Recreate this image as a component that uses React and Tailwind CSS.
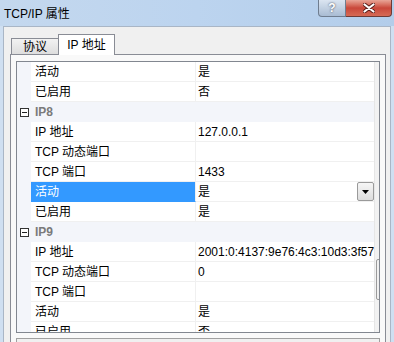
import React from 'react';

const font = { fontFamily: '"Liberation Sans", "Noto Sans CJK SC", sans-serif' };

const rows = [
  { name: '活动', value: '是' },
  { name: '已启用', value: '否' },
  { cat: 'IP8' },
  { name: 'IP 地址', value: '127.0.0.1' },
  { name: 'TCP 动态端口', value: '' },
  { name: 'TCP 端口', value: '1433' },
  { name: '活动', value: '是', selected: true },
  { name: '已启用', value: '是' },
  { cat: 'IP9' },
  { name: 'IP 地址', value: '2001:0:4137:9e76:4c3:10d3:3f57' },
  { name: 'TCP 动态端口', value: '0' },
  { name: 'TCP 端口', value: '' },
  { name: '活动', value: '是' },
  { name: '已启用', value: '否' },
];

const Row = ({ row }) => {
  if (row.cat) {
    return (
      <div className="flex shrink-0 h-[20px] items-center bg-[#f3f5fa]">
        <div className="w-[14px] flex justify-center">
          <div className="w-[9px] h-[9px] border border-[#333] bg-white flex items-center justify-center">
            <div className="w-[5px] h-px bg-[#222]" />
          </div>
        </div>
        <span className="ml-[4px] text-[12px] font-bold text-[#7a7a7a]">{row.cat}</span>
      </div>
    );
  }
  return (
    <div className="flex shrink-0 h-[20px]">
      <div className="w-[14px] bg-[#f3f5fa]" />
      <div
        className={`w-[165px] flex items-center pl-[4px] border-b border-r border-[#f0f0f0] text-[12px] ${
          row.selected ? 'bg-[#3399ff] text-white border-b-[#3399ff]' : 'bg-white text-black'
        }`}
      >
        {row.name}
      </div>
      <div className="flex-1 flex items-center pl-[2px] bg-white border-b border-[#f0f0f0] text-[12px] text-black whitespace-nowrap overflow-hidden relative">
        {row.value}
        {row.selected && (
          <div className="absolute right-0 top-0 w-[17px] h-[19px] border border-[#9a9a9a] rounded-[2px] bg-gradient-to-b from-[#f6f6f6] to-[#dcdcdc] flex items-center justify-center">
            <svg width="7" height="4" viewBox="0 0 7 4">
              <path d="M0 0h7L3.5 4z" fill="#000" />
            </svg>
          </div>
        )}
      </div>
    </div>
  );
};

export default function App() {
  return (
    <div className="w-[394px] h-[342px] overflow-hidden bg-[#cfdff1] flex flex-col" style={font}>
      {/* title bar */}
      <div className="h-[26px] shrink-0 flex justify-between bg-gradient-to-r from-[#c4d8ee] via-[#bcd4ef] to-[#b3cdea]">
        <span className="mt-[5px] ml-[4px] text-[12px] text-black">TCP/IP 属性</span>
        <div className="flex items-start mr-[2px]">
          <div className="w-[28px] h-[17px] rounded-bl-[4px] border border-t-0 border-[#6f7d8f] bg-gradient-to-b from-[#dbe5f1] to-[#a9bcd3] flex items-center justify-center text-[12px] font-bold text-white [text-shadow:0_0_2px_#334]">
            ?
          </div>
          <div className="w-[46px] h-[17px] rounded-br-[4px] border border-t-0 border-l-0 border-[#6e3a35] bg-gradient-to-b from-[#e8a597] via-[#c9473a] to-[#d66a55] flex items-center justify-center">
            <svg width="12" height="10" viewBox="0 0 12 10">
              <path d="M1.5 1.5L10.5 8.5M10.5 1.5L1.5 8.5" stroke="#5a1e1a" strokeWidth="4" strokeLinecap="round" />
              <path d="M1.5 1.5L10.5 8.5M10.5 1.5L1.5 8.5" stroke="#fff" strokeWidth="2.2" strokeLinecap="round" />
            </svg>
          </div>
        </div>
      </div>

      {/* client */}
      <div className="flex-1 mx-[3px] bg-[#f0f0f0] border-l border-r border-t border-[#a9b6c6] flex flex-col">
        {/* tabs */}
        <div className="flex shrink-0 items-end h-[27px] pl-[7px]">
          <div className="w-[48px] h-[17px] mb-[-1px] border border-b-0 border-[#898c95] bg-gradient-to-b from-[#f2f2f2] to-[#dcdcdc] text-[12px] flex items-center justify-center">
            协议
          </div>
          <div className="relative z-10 w-[57px] h-[21px] mb-[-1px] -ml-px border border-b-0 border-[#898c95] bg-white text-[12px] flex items-center justify-center">
            IP 地址
          </div>
        </div>

        {/* tab panel */}
        <div className="flex-1 ml-[6px] mr-[4px] border border-[#898c95] bg-[#f9f9f9] pt-[6px] px-[5px]">
          <div className="h-[272px] border border-[#828790] bg-white flex overflow-hidden">
            <div className="flex-1 flex flex-col">
              {rows.map((r, i) => (
                <Row key={i} row={r} />
              ))}
            </div>
            {/* scrollbar */}
            <div className="w-[17px] shrink-0 bg-[#f2f2f2] border-l border-[#e6e6e6] flex flex-col items-center">
              <div className="h-[17px] flex items-center justify-center">
                <svg width="7" height="4" viewBox="0 0 7 4">
                  <path d="M0 4h7L3.5 0z" fill="#404040" />
                </svg>
              </div>
              <div className="flex-1 w-full relative">
                <div className="absolute left-[1px] right-[1px] top-[180px] h-[41px] rounded-[2px] border border-[#9a9a9a] bg-gradient-to-r from-[#f2f2f2] via-[#e6e6e6] to-[#d6d6d6] flex flex-col items-center justify-center gap-[2px]">
                  <div className="w-[7px] h-px bg-[#6a6a6a]" />
                  <div className="w-[7px] h-px bg-[#6a6a6a]" />
                  <div className="w-[7px] h-px bg-[#6a6a6a]" />
                  <div className="w-[7px] h-px bg-[#6a6a6a]" />
                </div>
              </div>
              <div className="h-[17px] flex items-center justify-center">
                <svg width="7" height="4" viewBox="0 0 7 4">
                  <path d="M0 0h7L3.5 4z" fill="#404040" />
                </svg>
              </div>
            </div>
          </div>
          {/* description box */}
          <div className="mt-[5px] h-[40px] border border-[#a0a0a0] bg-[#f0f0f0]" />
        </div>
      </div>
    </div>
  );
}
